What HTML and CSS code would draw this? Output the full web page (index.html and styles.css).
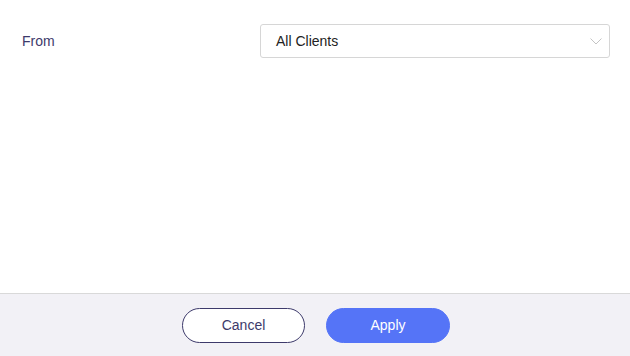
FILE: index.html
```html
<!DOCTYPE html>
<html lang="en">
<head>
<meta charset="utf-8">
<title>Filter</title>
<link rel="stylesheet" href="styles.css">
</head>
<body>
<div class="dialog">
  <div class="content">
    <div class="field">
      <label class="field-label">From</label>
      <div class="select">
        <span class="select-value">All Clients</span>
        <svg class="chevron" width="12" height="7" viewBox="0 0 12 7"><path d="M0.5 0.5 L6 6 L11.5 0.5" fill="none" stroke="#c4c4c4" stroke-width="1"/></svg>
      </div>
    </div>
  </div>
  <div class="footer">
    <button class="btn btn-cancel">Cancel</button>
    <button class="btn btn-apply">Apply</button>
  </div>
</div>
</body>
</html>
```

FILE: styles.css
```css
* { box-sizing: border-box; }
html, body {
  margin: 0;
  padding: 0;
  background: #fff;
  font-family: "Liberation Sans", Arial, sans-serif;
}
.dialog {
  width: 630px;
  height: 356px;
  display: flex;
  flex-direction: column;
}
.content {
  flex: 1;
  padding: 24px 20px 0 22px;
}
.field {
  display: flex;
  align-items: center;
  justify-content: space-between;
}
.field-label {
  font-size: 14px;
  color: #3d3a6b;
}
.select {
  width: 350px;
  height: 34px;
  border: 1px solid #d6d6d6;
  border-radius: 3px;
  display: flex;
  align-items: center;
  justify-content: space-between;
  padding: 0 7px 0 15px;
}
.select-value {
  font-size: 14px;
  color: #222;
}
.chevron { display: block; margin-top: 1px; }
.footer {
  height: 63px;
  border-top: 1px solid #d9d9d9;
  background: #f2f1f6;
  display: flex;
  justify-content: center;
  align-items: center;
  gap: 21px;
  padding-left: 2px;
}
.btn {
  width: 124px;
  height: 35px;
  border-radius: 18px;
  font-family: "Liberation Sans", Arial, sans-serif;
  font-size: 14px;
  cursor: pointer;
}
.btn-cancel {
  width: 123px;
  background: #fff;
  border: 1px solid #3d3a6b;
  color: #3d3a6b;
}
.btn-apply {
  background: #5574f7;
  border: 1px solid #5574f7;
  color: #fff;
}
```
